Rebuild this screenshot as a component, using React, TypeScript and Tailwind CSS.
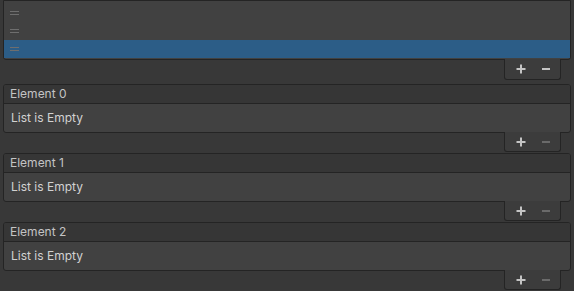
import React from 'react';

const font = { fontFamily: 'Inter, "Noto Sans", sans-serif' };

function Handle() {
  return (
    <div className="flex flex-col gap-[2px] w-[9px] ml-[6px]">
      <div className="h-px bg-[#6e6e6e]" />
      <div className="h-px bg-[#6e6e6e]" />
    </div>
  );
}

function Footer({ canRemove, tall }: { canRemove: boolean; tall?: boolean }) {
  return (
    <div
      className={`ml-auto mr-[10px] -mt-px w-[57px] flex items-center border border-t-0 border-[#242424] rounded-b-[3px] bg-[#3c3c3c] ${
        tall ? 'h-[21px]' : 'h-[20px]'
      }`}
    >
      <svg width="10" height="10" viewBox="0 0 10 10" className="ml-[11px]">
        <path d="M5 0.5v9M0.5 5h9" stroke="#c4c4c4" strokeWidth="2" />
      </svg>
      <svg width="10" height="10" viewBox="0 0 10 10" className="ml-[15px]">
        <path d="M1 5h8" stroke={canRemove ? '#c4c4c4' : '#6a6a6a'} strokeWidth="2" />
      </svg>
    </div>
  );
}

function ElementBlock({ index }: { index: number }) {
  return (
    <div className={index === 0 ? 'mt-[4px]' : 'mt-px'}>
      <div className="border border-[#242424] rounded-[3px] bg-[#414141] overflow-hidden">
        <div className="h-[19px] px-[6px] flex items-center bg-[#363636] border-b border-[#242424] text-[12px] text-[#c4c4c4]">
          Element {index}
        </div>
        <div className="h-[28px] px-[7px] flex items-center text-[12px] text-[#d2d2d2]">List is Empty</div>
      </div>
      <Footer canRemove={false} />
    </div>
  );
}

export default function App() {
  const rows = [0, 1, 2];
  const selected = 2;
  return (
    <div className="w-[574px] h-[291px] bg-[#383838] px-[3px] overflow-hidden" style={font}>
      <div>
        <div className="border border-[#242424] rounded-b-[3px] bg-[#414141] pt-[3px] pb-px">
          {rows.map((r) => (
            <div key={r} className={`h-[18px] flex items-center ${r === selected ? 'bg-[#2c5d87]' : ''}`}>
              <Handle />
            </div>
          ))}
        </div>
        <Footer canRemove tall />
      </div>
      <div className="flex flex-col">
        {[0, 1, 2].map((i) => (
          <ElementBlock key={i} index={i} />
        ))}
      </div>
    </div>
  );
}
